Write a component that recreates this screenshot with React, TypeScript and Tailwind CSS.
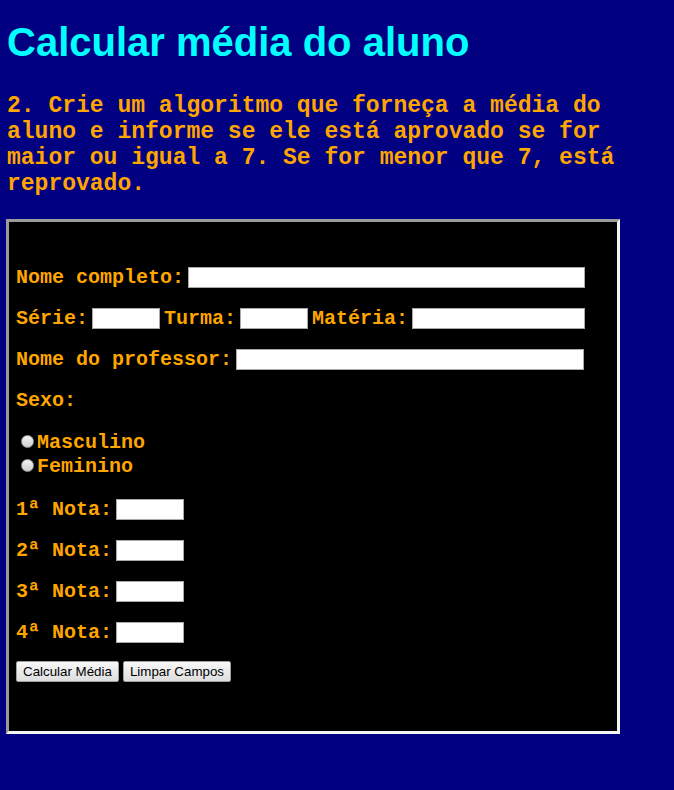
export default function App() {
  const label = "font-['Liberation_Mono',monospace] font-bold text-[20px] text-[#ffa500] whitespace-pre";
  const field = "h-[21px] bg-white border border-[#a9a9a9]";
  const btn =
    "h-[21px] px-[6px] border border-[#a0a0a0] rounded-[2px] bg-gradient-to-b from-[#f8f8f8] to-[#dddddd] text-[13.33px] text-black font-['Liberation_Sans',Arial,sans-serif] leading-none";

  const notas = ["1ª", "2ª", "3ª", "4ª"];

  return (
    <div className="min-h-[790px] w-full bg-[#000080] pt-[19px]">
      <h1 className="ml-[7px] font-['Liberation_Sans',Arial,sans-serif] font-bold text-[40px] leading-[46px] text-[#00ffff]">
        Calcular média do aluno
      </h1>

      <p className="mt-[28px] ml-[7px] w-[660px] font-['Liberation_Mono',monospace] font-bold text-[23px] leading-[26px] text-[#ffa500]">
        2. Crie um algoritmo que forneça a média do aluno e informe se ele está aprovado se for maior ou igual a 7. Se for
        menor que 7, está reprovado.
      </p>

      <form className="mt-[22px] ml-[6px] w-[614px] h-[515px] bg-black border-[3px] border-t-[#9a9a9a] border-l-[#9a9a9a] border-b-[#f4f4f4] border-r-[#f4f4f4] pl-[7px] pt-[45px] flex flex-col">
        <div className="flex items-center gap-1 h-[21px]">
          <span className={label}>Nome completo:</span>
          <input className={`${field} w-[397px]`} />
        </div>

        <div className="flex items-center gap-1 h-[21px] mt-[20px]">
          <span className={label}>Série:</span>
          <input className={`${field} w-[68px]`} />
          <span className={label}>Turma:</span>
          <input className={`${field} w-[68px]`} />
          <span className={label}>Matéria:</span>
          <input className={`${field} w-[173px]`} />
        </div>

        <div className="flex items-center gap-1 h-[21px] mt-[20px]">
          <span className={label}>Nome do professor:</span>
          <input className={`${field} w-[348px]`} />
        </div>

        <div className="flex items-center h-[21px] mt-[20px]">
          <span className={label}>Sexo:</span>
        </div>

        <div className="mt-[20px] flex flex-col">
          {["Masculino", "Feminino"].map((s) => (
            <div key={s} className="flex items-center h-[24px]">
              <span className="ml-[5px] mr-[3px] -mt-[3px] w-[13px] h-[13px] rounded-full border border-[#9a9a9a] bg-gradient-to-b from-[#f4f4f4] to-[#cfcfcf]" />
              <span className={label}>{s}</span>
            </div>
          ))}
        </div>

        {notas.map((n, i) => (
          <div key={n} className={`flex items-center gap-1 h-[21px] ${i === 0 ? "mt-[20px]" : "mt-[20px]"}`}>
            <span className={label}>{n} Nota:</span>
            <input className={`${field} w-[68px]`} />
          </div>
        ))}

        <div className="flex gap-1 mt-[18px]">
          <button type="button" className={btn}>
            Calcular Média
          </button>
          <button type="button" className={btn}>
            Limpar Campos
          </button>
        </div>
      </form>
    </div>
  );
}
